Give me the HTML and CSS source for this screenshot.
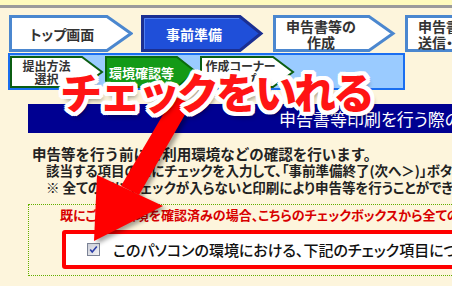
FILE: index.html
```html
<!DOCTYPE html>
<html lang="ja">
<head>
<meta charset="utf-8">
<title>事前準備</title>
<link rel="stylesheet" href="styles.css">
</head>
<body>
<div class="topbar"></div>
<nav class="steps">
  <div class="step">
    <svg class="shape" width="124" height="37" viewBox="0 0 124 37"><polygon class="s-white" points="1.5,1.5 98,1.5 122,18.5 98,35.5 1.5,35.5"/></svg>
    <span class="label l1"><span>トップ画面</span></span>
  </div>
  <div class="step">
    <svg class="shape" width="124" height="37" viewBox="0 0 124 37"><polygon class="s-blue" points="1.5,1.5 99,1.5 120,18.5 99,35.5 1.5,35.5"/><polyline class="s-hl" points="3.5,34 3.5,3.5 98,3.5"/></svg>
    <span class="label l2"><span>事前準備</span></span>
  </div>
  <div class="step">
    <svg class="shape" width="124" height="37" viewBox="0 0 124 37"><polygon class="s-white" points="1.5,1.5 96,1.5 120,18.5 96,35.5 1.5,35.5"/></svg>
    <span class="label l3"><span>申告書等の</span><span>作成</span></span>
  </div>
  <div class="step step-box">
    <span class="label l4"><span>申告書等の</span><span>送信・印刷</span></span>
  </div>
</nav>
<div class="substeps">
  <div class="substep">
    <svg class="shape" width="95" height="32" viewBox="0 0 95 32"><polygon class="g-white" points="1,1 72,1 92,16 72,31 1,31"/></svg>
    <span class="sublabel sl1"><span class="line">提出方法</span><span class="line">選択</span></span>
  </div>
  <div class="substep">
    <svg class="shape" width="95" height="32" viewBox="0 0 95 32"><polygon class="g-green" points="1,1 72,1 91,16 72,31 1,31"/></svg>
    <span class="sublabel sl2"><span class="line">環境確認等</span></span>
  </div>
  <div class="substep">
    <svg class="shape" width="95" height="32" viewBox="0 0 95 32"><polygon class="g-white" points="1,1 73,1 93,16 73,31 1,31"/></svg>
    <span class="sublabel sl3"><span class="line">作成コーナー</span><span class="line">トップ</span></span>
  </div>
</div>
<h1 class="titlebar">申告書等印刷を行う際の環境確認</h1>
<div class="intro">
  <p class="lead">申告等を行う前にご利用環境などの確認を行います。</p>
  <p class="note">該当する項目の□にチェックを入力して、「事前準備終了(次へ＞)」ボタンを押してください。</p>
  <p class="note">※&nbsp;全ての□にチェックが入らないと印刷により申告等を行うことができません。</p>
</div>
<div class="confirm">
  <p class="confirm-text">既にご利用環境を確認済みの場合、こちらのチェックボックスから全ての項目にチェックを入れることができます。</p>
  <label class="checkrow">
    <svg class="checkbox" width="13" height="13" viewBox="0 0 13 13"><defs><linearGradient id="cb" x1="0" y1="0" x2="1" y2="1"><stop offset="0" stop-color="#c9ccd6"/><stop offset="1" stop-color="#f4f4f6"/></linearGradient></defs><rect x="0.5" y="0.5" width="12" height="12" fill="url(#cb)" stroke="#7b8396"/><path d="M3.2 6.6 L5.2 9 L9.8 3.4" fill="none" stroke="#2b3ea8" stroke-width="1.6"/></svg>
    <span>このパソコンの環境における、下記のチェック項目について確認しました。</span>
  </label>
</div>
<svg class="arrow" width="452" height="286" viewBox="0 0 452 286">
  <polygon points="174,96 191,104 139,195 121,186" />
  <polygon points="97,175 163,206 94,241" />
</svg>
<div class="callout">チェックをいれる</div>
</body>
</html>
```

FILE: styles.css
```css
html, body {
  margin: 0;
  padding: 0;
}
body {
  width: 452px;
  height: 286px;
  overflow: hidden;
  position: relative;
  background: #fdf5dc;
  font-family: "Noto Sans CJK JP", "Noto Sans", sans-serif;
  font-feature-settings: "palt";
  color: #222;
}
p { margin: 0; }

.topbar {
  height: 5px;
  background: #fffbbd;
  border-bottom: 3px solid #9b9b9b;
}

.steps {
  display: flex;
  margin-top: 7px;
  padding-left: 9px;
  height: 37px;
}
.step {
  position: relative;
  flex: none;
  width: 132px;
  height: 37px;
}
.shape {
  position: absolute;
  left: 0;
  top: 0;
}
.s-white { fill: #ffffff; stroke: #4b87cf; stroke-width: 3; }
.s-blue { fill: #1f4fd9; stroke: #1b2f92; stroke-width: 3; }
.s-hl { fill: none; stroke: #4f7ff0; stroke-width: 1; }
.label {
  position: relative;
  height: 37px;
  display: flex;
  flex-direction: column;
  align-items: center;
  justify-content: center;
  text-align: center;
  font-size: 14px;
  font-weight: 700;
  line-height: 16px;
  color: #333;
  white-space: nowrap;
}
.l1 { width: 106px; }
.l2 { width: 106px; color: #fff; }
.l3 { width: 96px; }
.step-box {
  width: 130px;
  height: 37px;
  box-sizing: border-box;
  border: 3px solid #4b87cf;
  background: #fff;
}
.l4 {
  height: 31px;
  align-items: flex-start;
  text-align: left;
  padding-left: 10px;
}

.substeps {
  display: flex;
  margin: 1px 0 0 8px;
  width: 393px;
  height: 32px;
  padding-top: 1px;
  border: 2px solid #1a6ef0;
  background: #9acbff;
}
.substep {
  position: relative;
  flex: none;
  width: 95px;
  height: 32px;
}
.g-white { fill: #fff; stroke: #0b5e12; stroke-width: 2; }
.g-green { fill: #139a17; stroke: #0a6a0e; stroke-width: 2; }
.sublabel {
  position: relative;
  width: 73px;
  height: 32px;
  display: flex;
  flex-direction: column;
  justify-content: center;
  font-size: 12px;
  font-weight: 700;
  line-height: 13px;
  color: #333;
  white-space: nowrap;
}
.sublabel .line {
  display: block;
  text-align: center;
}
.sl2 { color: #fff; font-size: 13px; }
.sl3 { padding-left: 4px; }

.titlebar {
  margin: 14px 0 0 28px;
  height: 29px;
  width: 700px;
  padding-left: 251px;
  background: #000091;
  color: #fff;
  font-size: 17px;
  font-weight: 400;
  line-height: 29px;
  white-space: nowrap;
}

.intro {
  padding: 12px 0 0 32px;
  white-space: nowrap;
}
.lead {
  font-size: 14.5px;
  font-weight: 700;
  line-height: 17px;
  font-feature-settings: normal;
}
.note {
  padding-left: 14px;
  font-size: 13.5px;
  font-weight: 700;
  line-height: 17px;
}

.confirm {
  margin: 8px 0 0 28px;
  width: 700px;
  border: 1px dotted #62b000;
  padding: 2px 0 6px 0;
}
.confirm-text {
  padding-left: 31px;
  font-size: 13px;
  font-weight: 700;
  line-height: 16px;
  color: #d80000;
  white-space: nowrap;
}
.checkrow {
  display: flex;
  align-items: center;
  gap: 13px;
  margin: 7px 0 0 33px;
  height: 31px;
  padding-left: 21px;
  border: 4px solid #ff0000;
  border-radius: 3px;
  background: #fff;
  font-size: 15px;
  font-weight: 500;
  color: #111;
  white-space: nowrap;
}
.checkbox { flex: none; }

.arrow {
  position: absolute;
  left: 0;
  top: 0;
  fill: #ff0000;
  filter: drop-shadow(3px 3px 2px rgba(0, 0, 0, 0.35));
}

.callout {
  position: absolute;
  left: 60px;
  top: 66px;
  font-size: 42px;
  font-weight: 900;
  letter-spacing: -3px;
  line-height: 50px;
  color: #ff1414;
  font-feature-settings: normal;
  white-space: nowrap;
  text-shadow:
    4px 0 0 #fff, -4px 0 0 #fff, 0 4px 0 #fff, 0 -4px 0 #fff,
    3px 3px 0 #fff, -3px 3px 0 #fff, 3px -3px 0 #fff, -3px -3px 0 #fff,
    2px 4px 0 #fff, -2px 4px 0 #fff, 2px -4px 0 #fff, -2px -4px 0 #fff,
    4px 2px 0 #fff, -4px 2px 0 #fff, 4px -2px 0 #fff, -4px -2px 0 #fff,
    3px 5px 5px rgba(0, 0, 0, 0.45);
}
```
